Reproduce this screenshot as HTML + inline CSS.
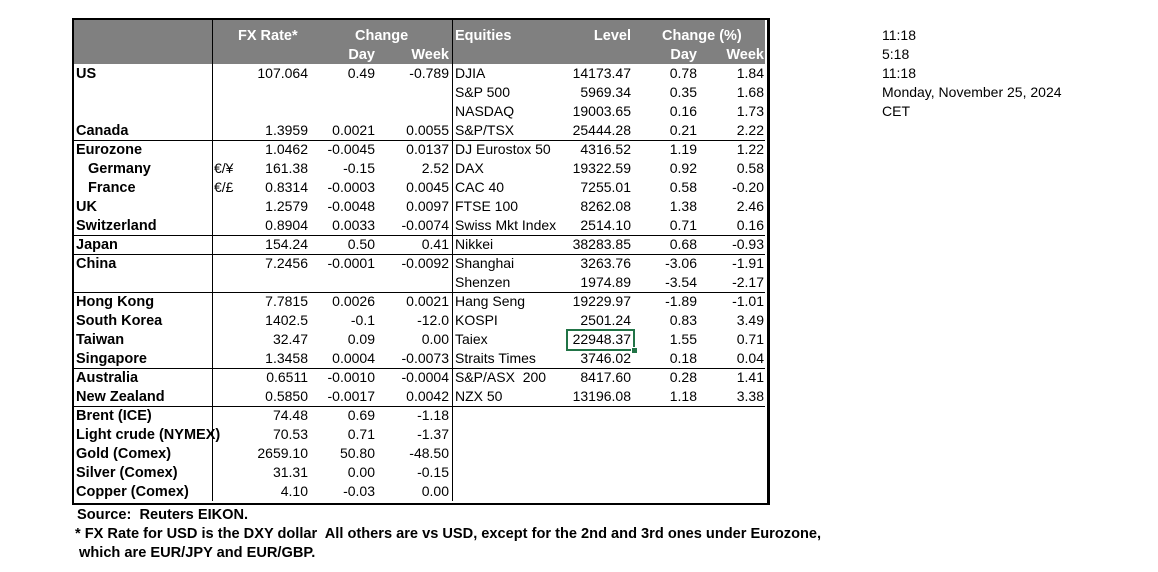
<!DOCTYPE html>
<html><head><meta charset="utf-8"><style>
body{margin:0;width:1158px;height:572px;background:#fff;font-family:"Liberation Sans",Arial,sans-serif;font-size:14px;color:#000;position:relative;overflow:hidden}
.box{position:absolute;left:72px;top:18px;width:693px;height:483px;border:2px solid #000;border-right-width:3px}
.hd{position:absolute;left:74px;top:20px;width:691px;height:44px;background:#808080}
.vl{position:absolute;width:1px;background:#000}
.hl{position:absolute;left:74px;width:691px;height:1px;background:#000}
.r{position:absolute;left:0;width:1158px;height:19px;line-height:19px}
.r span{position:absolute;white-space:nowrap}
.r span.l,.r span.li,.r span.h{top:1px}
.l{left:76px;font-weight:bold;font-size:14.5px}
.li{left:88px;font-weight:bold;font-size:14.5px}
.cu{left:214px}
.f{right:850px}
.d{right:783px}
.w{right:709px}
.e{left:455px}
.v{right:527px}
.ed{right:461px}
.ew{right:394px}
.h{color:#fff;font-weight:bold;font-size:14.5px}
.side{position:absolute;left:882px;line-height:19px}
.foot{position:absolute;font-weight:bold;white-space:nowrap;font-size:14.6px}
</style></head><body>
<div class="hd"></div>
<div class="box"></div>
<div class="vl" style="left:212px;top:20px;height:481px"></div>
<div class="vl" style="left:452px;top:20px;height:481px"></div>
<div class="hl" style="top:140px"></div>
<div class="hl" style="top:235px"></div>
<div class="hl" style="top:254px"></div>
<div class="hl" style="top:292px"></div>
<div class="hl" style="top:368px"></div>
<div class="hl" style="top:406px"></div>

<div class="r" style="top:26px"><span class="h" style="left:238px">FX Rate*</span><span class="h" style="left:355px">Change</span><span class="h e">Equities</span><span class="h v">Level</span><span class="h" style="left:662px">Change (%)</span></div>
<div class="r" style="top:45px"><span class="h d">Day</span><span class="h w">Week</span><span class="h ed">Day</span><span class="h ew">Week</span></div>

<div class="r" style="top:64px"><span class="l">US</span><span class="f">107.064</span><span class="d">0.49</span><span class="w">-0.789</span><span class="e">DJIA</span><span class="v">14173.47</span><span class="ed">0.78</span><span class="ew">1.84</span></div>
<div class="r" style="top:83px"><span class="e">S&amp;P 500</span><span class="v">5969.34</span><span class="ed">0.35</span><span class="ew">1.68</span></div>
<div class="r" style="top:102px"><span class="e">NASDAQ</span><span class="v">19003.65</span><span class="ed">0.16</span><span class="ew">1.73</span></div>
<div class="r" style="top:121px"><span class="l">Canada</span><span class="f">1.3959</span><span class="d">0.0021</span><span class="w">0.0055</span><span class="e">S&amp;P/TSX</span><span class="v">25444.28</span><span class="ed">0.21</span><span class="ew">2.22</span></div>
<div class="r" style="top:140px"><span class="l">Eurozone</span><span class="f">1.0462</span><span class="d">-0.0045</span><span class="w">0.0137</span><span class="e">DJ Eurostox 50</span><span class="v">4316.52</span><span class="ed">1.19</span><span class="ew">1.22</span></div>
<div class="r" style="top:159px"><span class="li">Germany</span><span class="cu">€/¥</span><span class="f">161.38</span><span class="d">-0.15</span><span class="w">2.52</span><span class="e">DAX</span><span class="v">19322.59</span><span class="ed">0.92</span><span class="ew">0.58</span></div>
<div class="r" style="top:178px"><span class="li">France</span><span class="cu">€/£</span><span class="f">0.8314</span><span class="d">-0.0003</span><span class="w">0.0045</span><span class="e">CAC 40</span><span class="v">7255.01</span><span class="ed">0.58</span><span class="ew">-0.20</span></div>
<div class="r" style="top:197px"><span class="l">UK</span><span class="f">1.2579</span><span class="d">-0.0048</span><span class="w">0.0097</span><span class="e">FTSE 100</span><span class="v">8262.08</span><span class="ed">1.38</span><span class="ew">2.46</span></div>
<div class="r" style="top:216px"><span class="l">Switzerland</span><span class="f">0.8904</span><span class="d">0.0033</span><span class="w">-0.0074</span><span class="e">Swiss Mkt Index</span><span class="v">2514.10</span><span class="ed">0.71</span><span class="ew">0.16</span></div>
<div class="r" style="top:235px"><span class="l">Japan</span><span class="f">154.24</span><span class="d">0.50</span><span class="w">0.41</span><span class="e">Nikkei</span><span class="v">38283.85</span><span class="ed">0.68</span><span class="ew">-0.93</span></div>
<div class="r" style="top:254px"><span class="l">China</span><span class="f">7.2456</span><span class="d">-0.0001</span><span class="w">-0.0092</span><span class="e">Shanghai</span><span class="v">3263.76</span><span class="ed">-3.06</span><span class="ew">-1.91</span></div>
<div class="r" style="top:273px"><span class="e">Shenzen</span><span class="v">1974.89</span><span class="ed">-3.54</span><span class="ew">-2.17</span></div>
<div class="r" style="top:292px"><span class="l">Hong Kong</span><span class="f">7.7815</span><span class="d">0.0026</span><span class="w">0.0021</span><span class="e">Hang Seng</span><span class="v">19229.97</span><span class="ed">-1.89</span><span class="ew">-1.01</span></div>
<div class="r" style="top:311px"><span class="l">South Korea</span><span class="f">1402.5</span><span class="d">-0.1</span><span class="w">-12.0</span><span class="e">KOSPI</span><span class="v">2501.24</span><span class="ed">0.83</span><span class="ew">3.49</span></div>
<div class="r" style="top:330px"><span class="l">Taiwan</span><span class="f">32.47</span><span class="d">0.09</span><span class="w">0.00</span><span class="e">Taiex</span><span class="v">22948.37</span><span class="ed">1.55</span><span class="ew">0.71</span></div>
<div class="r" style="top:349px"><span class="l">Singapore</span><span class="f">1.3458</span><span class="d">0.0004</span><span class="w">-0.0073</span><span class="e">Straits Times</span><span class="v">3746.02</span><span class="ed">0.18</span><span class="ew">0.04</span></div>
<div class="r" style="top:368px"><span class="l">Australia</span><span class="f">0.6511</span><span class="d">-0.0010</span><span class="w">-0.0004</span><span class="e">S&amp;P/ASX&nbsp; 200</span><span class="v">8417.60</span><span class="ed">0.28</span><span class="ew">1.41</span></div>
<div class="r" style="top:387px"><span class="l">New Zealand</span><span class="f">0.5850</span><span class="d">-0.0017</span><span class="w">0.0042</span><span class="e">NZX 50</span><span class="v">13196.08</span><span class="ed">1.18</span><span class="ew">3.38</span></div>
<div class="r" style="top:406px"><span class="l">Brent (ICE)</span><span class="f">74.48</span><span class="d">0.69</span><span class="w">-1.18</span></div>
<div class="r" style="top:425px"><span class="l">Light crude (NYMEX)</span><span class="f">70.53</span><span class="d">0.71</span><span class="w">-1.37</span></div>
<div class="r" style="top:444px"><span class="l">Gold (Comex)</span><span class="f">2659.10</span><span class="d">50.80</span><span class="w">-48.50</span></div>
<div class="r" style="top:463px"><span class="l">Silver (Comex)</span><span class="f">31.31</span><span class="d">0.00</span><span class="w">-0.15</span></div>
<div class="r" style="top:482px"><span class="l">Copper (Comex)</span><span class="f">4.10</span><span class="d">-0.03</span><span class="w">0.00</span></div>

<div style="position:absolute;left:566px;top:329px;width:65px;height:18px;border:2px solid #217346"></div>
<div style="position:absolute;left:631px;top:347px;width:5px;height:5px;background:#217346;border:1px solid #fff"></div>

<div class="side" style="top:26px">11:18<br>5:18<br>11:18<br>Monday, November 25, 2024<br>CET</div>

<div class="foot" style="left:77px;top:507px">Source:&nbsp; Reuters EIKON.</div>
<div class="foot" style="left:75px;top:526px">* FX Rate for USD is the DXY dollar&nbsp; All others are vs USD, except for the 2nd and 3rd ones under Eurozone,</div>
<div class="foot" style="left:79px;top:545px">which are EUR/JPY and EUR/GBP.</div>
</body></html>
